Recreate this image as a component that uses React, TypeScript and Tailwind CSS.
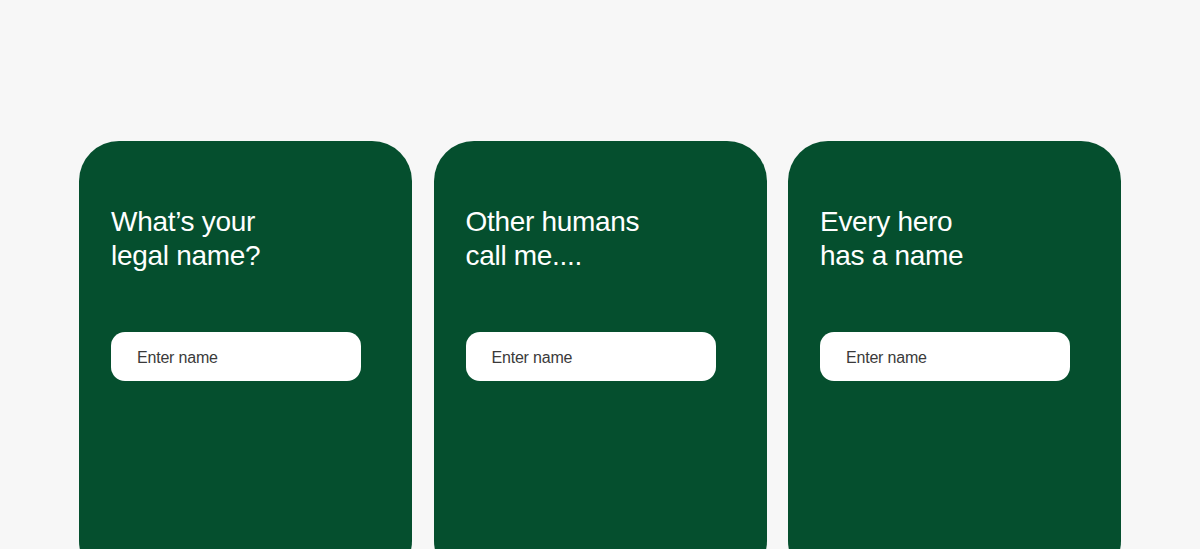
import React from "react";

const cards = [
  ["What’s your", "legal name?"],
  ["Other humans", "call me...."],
  ["Every hero", "has a name"],
];

export default function App() {
  return (
    <div className="w-[1200px] h-[549px] overflow-hidden bg-[#f7f7f7] flex justify-start gap-[21.5px] pl-[79px] pt-[141px]" style={{ fontFamily: '"Liberation Sans", Arial, sans-serif' }}>
      {cards.map((c, i) => (
        <div key={i} className="w-[333px] h-[440px] shrink-0 rounded-[40px] bg-[#054f2e] pl-[32px] pt-[64px]">
          <h2 className="text-[28px] leading-[34px] tracking-[-0.3px] text-white font-normal">
            {c[0]}
            <br />
            {c[1]}
          </h2>
          <div className="mt-[59px] w-[250px] h-[49px] rounded-[14px] bg-white flex items-center pl-[26px] pt-[2px] text-[16px] tracking-[-0.2px] text-[#3a3a3a]">
            Enter name
          </div>
        </div>
      ))}
    </div>
  );
}
